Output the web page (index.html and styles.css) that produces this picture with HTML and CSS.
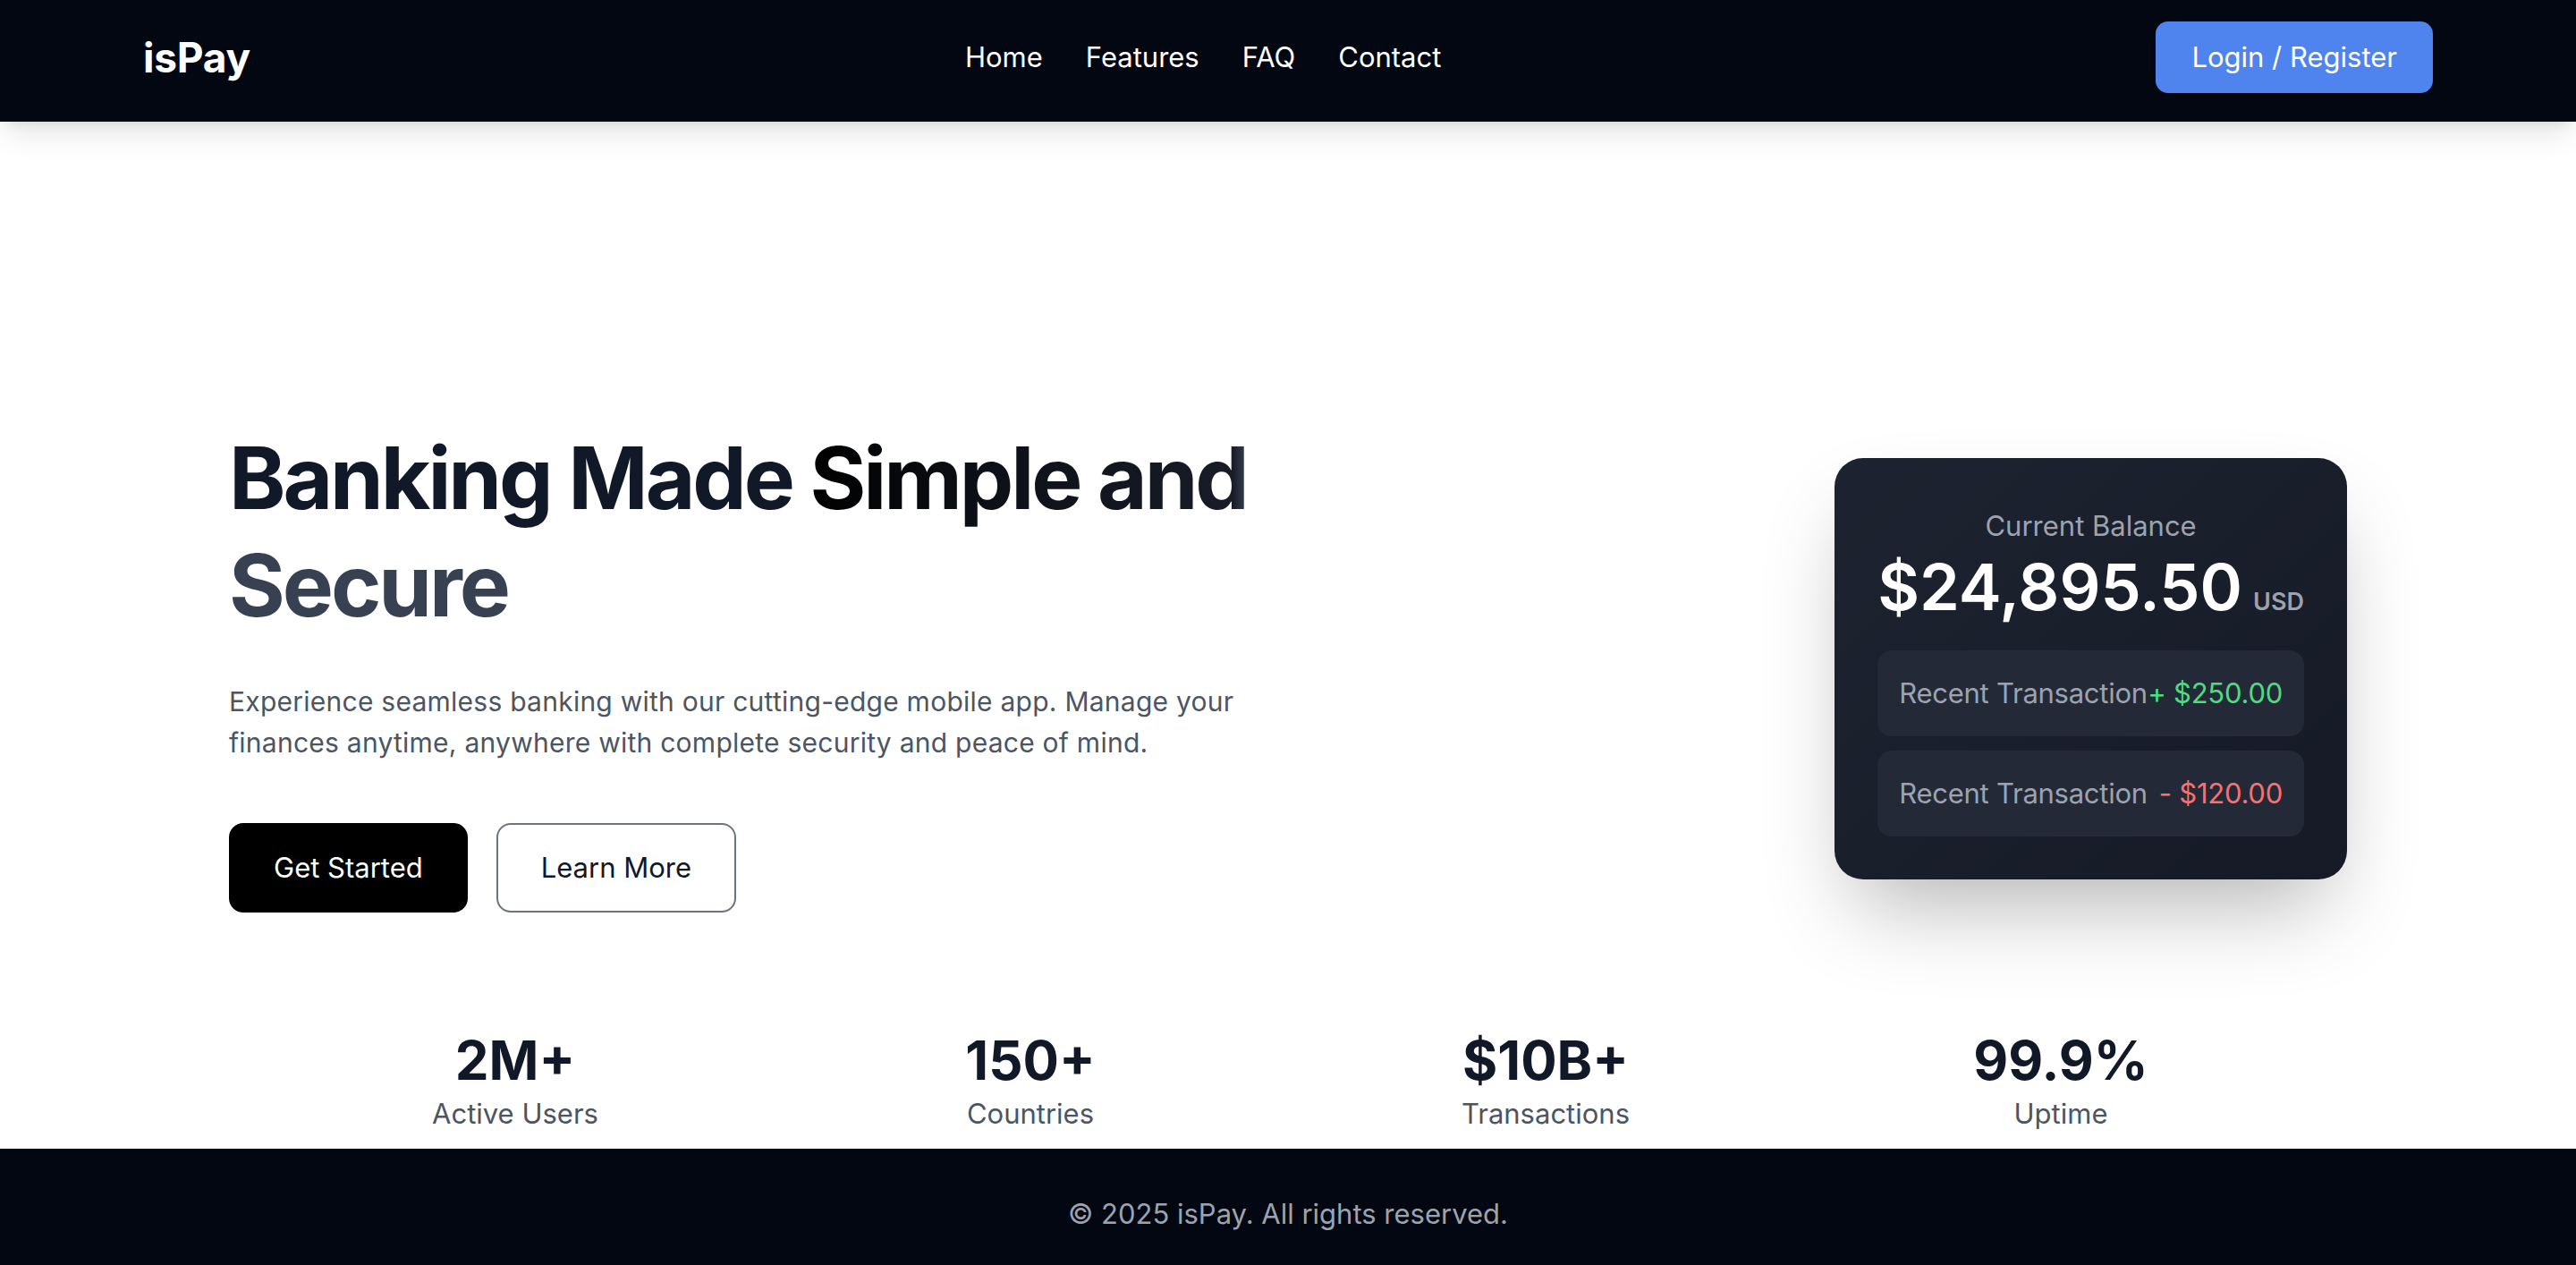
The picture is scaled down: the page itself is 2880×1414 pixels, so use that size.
FILE: index.html
```html
<!DOCTYPE html>
<html lang="en">
<head>
<meta charset="utf-8">
<title>isPay</title>
<link rel="stylesheet" href="styles.css">
</head>
<body>
<header class="navbar">
  <div class="logo">isPay</div>
  <nav class="nav-links">
    <a href="#">Home</a>
    <a href="#">Features</a>
    <a href="#">FAQ</a>
    <a href="#">Contact</a>
  </nav>
  <button class="btn-login">Login / Register</button>
</header>

<main>
  <section class="hero">
    <div class="hero-text">
      <h1 class="hero-title">Banking Made <span class="grad">Simple and Secure</span></h1>
      <p class="hero-desc">Experience seamless banking with our cutting-edge mobile app. Manage your finances anytime, anywhere with complete security and peace of mind.</p>
      <div class="hero-actions">
        <button class="btn-primary">Get Started</button>
        <button class="btn-outline">Learn More</button>
      </div>
    </div>

    <div class="balance-card">
      <div class="balance-label">Current Balance</div>
      <div class="balance-amount"><span class="amount">$24,895.50</span><span class="currency">USD</span></div>
      <div class="tx-list">
        <div class="tx-row"><span>Recent Transaction</span><span class="tx-in">+ $250.00</span></div>
        <div class="tx-row"><span>Recent Transaction</span><span class="tx-out">- $120.00</span></div>
      </div>
    </div>
  </section>

  <section class="stats">
    <div class="stat"><div class="stat-value">2M+</div><div class="stat-label">Active Users</div></div>
    <div class="stat"><div class="stat-value">150+</div><div class="stat-label">Countries</div></div>
    <div class="stat"><div class="stat-value">$10B+</div><div class="stat-label">Transactions</div></div>
    <div class="stat"><div class="stat-value">99.9%</div><div class="stat-label">Uptime</div></div>
  </section>
</main>

<footer class="footer">
  <p>© 2025 isPay. All rights reserved.</p>
</footer>
</body>
</html>
```

FILE: styles.css
```css
* {
  box-sizing: border-box;
}

html, body {
  margin: 0;
  padding: 0;
}

body {
  font-family: Inter, "Noto Sans", "Liberation Sans", sans-serif;
  font-size: 31px;
  line-height: 48px;
  color: #111827;
  background: #ffffff;
  overflow: hidden;
}

button {
  font-family: inherit;
  cursor: pointer;
}

/* ---------- Navbar ---------- */
.navbar {
  position: relative;
  z-index: 2;
  height: 136px;
  padding: 0 160px 8px;
  display: flex;
  align-items: center;
  justify-content: space-between;
  background: #030712;
  box-shadow: 0 20px 30px -6px rgba(0, 0, 0, 0.1), 0 8px 12px -8px rgba(0, 0, 0, 0.1);
}

.logo {
  color: #ffffff;
  font-size: 46px;
  font-weight: 700;
  line-height: 64px;
  letter-spacing: -0.005em;
}

.nav-links {
  display: flex;
  gap: 48px;
}

.nav-links a {
  color: #ffffff;
  text-decoration: none;
  font-size: 31px;
  line-height: 48px;
}

.btn-login {
  height: 80px;
  padding: 0 40px;
  border: none;
  border-radius: 14px;
  background: #4f84ee;
  color: #ffffff;
  font-size: 31px;
  line-height: 48px;
}

/* ---------- Hero ---------- */
.hero {
  display: flex;
  align-items: center;
  justify-content: space-between;
  padding: 338px 256px 0;
}

.hero-text {
  width: 1184px;
}

.hero-title {
  margin: 0;
  font-size: 96px;
  line-height: 120px;
  font-weight: 700;
  color: #111827;
  letter-spacing: -0.032em;
}

.grad {
  background: linear-gradient(to right, #000000 0%, #0d1017 25%, #181c27 59%, #374151 61%, #374151 100%);
  -webkit-background-clip: text;
  background-clip: text;
  color: transparent;
}

.hero-desc {
  margin: 47px 0 0;
  width: 1160px;
  font-size: 30px;
  line-height: 46px;
  letter-spacing: 0.25px;
  color: #4b5563;
}

.hero-actions {
  display: flex;
  gap: 32px;
  margin-top: 67px;
}

.btn-primary,
.btn-outline {
  height: 100px;
  padding: 0 48px;
  border-radius: 16px;
  font-size: 31px;
  line-height: 48px;
}

.btn-primary {
  background: #000000;
  border: 2px solid #000000;
  color: #ffffff;
}

.btn-outline {
  background: #ffffff;
  border: 2px solid #6b7280;
  color: #111827;
}

/* ---------- Balance card ---------- */
.balance-card {
  flex: none;
  padding: 52px 48px 48px;
  border-radius: 32px;
  background: linear-gradient(135deg, #1e2331, #151a26);
  box-shadow: 0 50px 100px -24px rgba(0, 0, 0, 0.3);
  text-align: center;
}

.balance-label {
  color: #9ca3af;
  font-size: 31px;
  line-height: 48px;
}

.balance-amount {
  margin-top: 4px;
  display: flex;
  justify-content: center;
  align-items: baseline;
  gap: 12px;
}

.amount {
  color: #ffffff;
  font-size: 72px;
  line-height: 80px;
  font-weight: 600;
}

.currency {
  color: #9ca3af;
  font-size: 27px;
  line-height: 32px;
  font-weight: 600;
}

.tx-list {
  margin-top: 31px;
  display: flex;
  flex-direction: column;
  gap: 16px;
}

.tx-row {
  display: flex;
  justify-content: space-between;
  padding: 24px;
  border-radius: 16px;
  background: #232937;
  color: #9ca3af;
  font-size: 31px;
  line-height: 48px;
  letter-spacing: -0.25px;
}

.tx-in {
  color: #4ade80;
}

.tx-out {
  color: #f87171;
}

/* ---------- Stats ---------- */
.stats {
  width: 2304px;
  margin: 129px auto 0;
  padding-bottom: 15px;
  display: grid;
  grid-template-columns: repeat(4, 1fr);
  text-align: center;
}

.stat-value {
  font-size: 60px;
  line-height: 72px;
  font-weight: 700;
  color: #111827;
}

.stat-label {
  font-size: 31px;
  line-height: 48px;
  color: #4b5563;
}

/* ---------- Footer ---------- */
.footer {
  background: #030712;
  padding: 49px 0 33px;
  text-align: center;
}

.footer p {
  margin: 0;
  color: #9ca3af;
  font-size: 31px;
  line-height: 48px;
}
```
